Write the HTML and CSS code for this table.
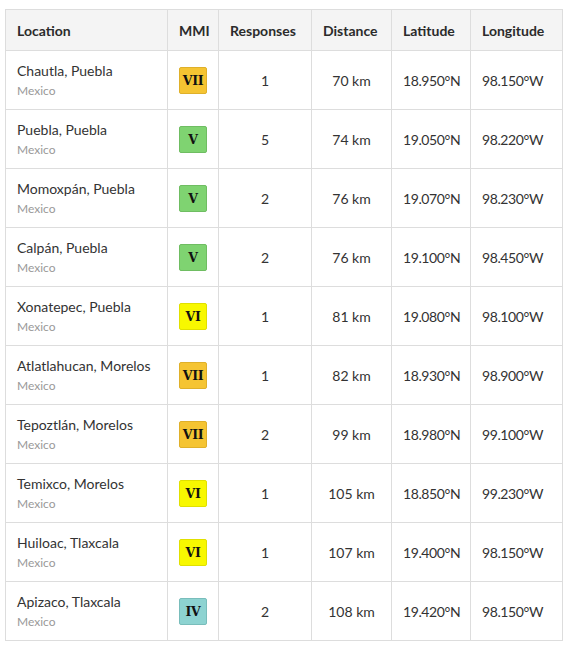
FILE: index.html
```html
<!DOCTYPE html>
<html>
<head>
<meta charset="utf-8">
<link rel="stylesheet" href="styles.css">
</head>
<body>
<table class="tbl">
  <colgroup>
    <col class="c-loc"><col class="c-mmi"><col class="c-resp"><col class="c-dist"><col class="c-lat"><col class="c-lon">
  </colgroup>
  <thead>
    <tr><th>Location</th><th>MMI</th><th>Responses</th><th>Distance</th><th>Latitude</th><th>Longitude</th></tr>
  </thead>
  <tbody>
    <tr><td><div class="name">Chautla, Puebla</div><div class="country">Mexico</div></td><td class="ctr"><span class="mmi mmi7">VII</span></td><td class="ctr">1</td><td class="ctr">70 km</td><td class="coord">18.950°N</td><td class="coord">98.150°W</td></tr>
    <tr><td><div class="name">Puebla, Puebla</div><div class="country">Mexico</div></td><td class="ctr"><span class="mmi mmi5">V</span></td><td class="ctr">5</td><td class="ctr">74 km</td><td class="coord">19.050°N</td><td class="coord">98.220°W</td></tr>
    <tr><td><div class="name">Momoxpán, Puebla</div><div class="country">Mexico</div></td><td class="ctr"><span class="mmi mmi5">V</span></td><td class="ctr">2</td><td class="ctr">76 km</td><td class="coord">19.070°N</td><td class="coord">98.230°W</td></tr>
    <tr><td><div class="name">Calpán, Puebla</div><div class="country">Mexico</div></td><td class="ctr"><span class="mmi mmi5">V</span></td><td class="ctr">2</td><td class="ctr">76 km</td><td class="coord">19.100°N</td><td class="coord">98.450°W</td></tr>
    <tr><td><div class="name">Xonatepec, Puebla</div><div class="country">Mexico</div></td><td class="ctr"><span class="mmi mmi6">VI</span></td><td class="ctr">1</td><td class="ctr">81 km</td><td class="coord">19.080°N</td><td class="coord">98.100°W</td></tr>
    <tr><td><div class="name">Atlatlahucan, Morelos</div><div class="country">Mexico</div></td><td class="ctr"><span class="mmi mmi7">VII</span></td><td class="ctr">1</td><td class="ctr">82 km</td><td class="coord">18.930°N</td><td class="coord">98.900°W</td></tr>
    <tr><td><div class="name">Tepoztlán, Morelos</div><div class="country">Mexico</div></td><td class="ctr"><span class="mmi mmi7">VII</span></td><td class="ctr">2</td><td class="ctr">99 km</td><td class="coord">18.980°N</td><td class="coord">99.100°W</td></tr>
    <tr><td><div class="name">Temixco, Morelos</div><div class="country">Mexico</div></td><td class="ctr"><span class="mmi mmi6">VI</span></td><td class="ctr">1</td><td class="ctr">105 km</td><td class="coord">18.850°N</td><td class="coord">99.230°W</td></tr>
    <tr><td><div class="name">Huiloac, Tlaxcala</div><div class="country">Mexico</div></td><td class="ctr"><span class="mmi mmi6">VI</span></td><td class="ctr">1</td><td class="ctr">107 km</td><td class="coord">19.400°N</td><td class="coord">98.150°W</td></tr>
    <tr><td><div class="name">Apizaco, Tlaxcala</div><div class="country">Mexico</div></td><td class="ctr"><span class="mmi mmi4">IV</span></td><td class="ctr">2</td><td class="ctr">108 km</td><td class="coord">19.420°N</td><td class="coord">98.150°W</td></tr>
  </tbody>
</table>
</body>
</html>
```
FILE: styles.css
```css
html, body { background: #fff; }
body {
  margin: 9px 0 0 5px;
  font-family: Lato, "Noto Sans", sans-serif;
  color: #333;
  font-size: 14px;
}
.tbl {
  border-collapse: collapse;
  table-layout: fixed;
  width: 557px;
}
.c-loc { width: 162px; }
.c-mmi { width: 51px; }
.c-resp { width: 93px; }
.c-dist { width: 80px; }
.c-lat { width: 79px; }
.c-lon { width: 92px; }
.tbl th, .tbl td {
  border: 1px solid #ddd;
  padding: 0 11px;
  text-align: left;
  vertical-align: middle;
  white-space: nowrap;
}
.tbl th {
  background: #f4f4f4;
  font-weight: 700;
  height: 40px;
  font-size: 14px;
  color: #2b2b2b;
}
.tbl td { height: 58px; }
.tbl td.ctr { text-align: center; }
.tbl td.coord { letter-spacing: -0.4px; }
.name { font-size: 14px; line-height: 18px; color: #333; }
.country { font-size: 12px; line-height: 16px; color: #999; margin-top: 3px; }
.mmi {
  display: inline-block;
  width: 26px;
  height: 25px;
  line-height: 25px;
  text-align: center;
  border: 1px solid rgba(0,0,0,0.12);
  border-radius: 2px;
  font-family: "DejaVu Serif", "Liberation Serif", serif;
  font-weight: 700;
  font-size: 12.5px;
  letter-spacing: -0.3px;
  color: #111;
  vertical-align: middle;
}
.mmi7 { background: #f5c432; border-color: #dfb02a; }
.mmi5 { background: #7fd371; border-color: #6fbd62; }
.mmi6 { background: #f8f800; border-color: #e0e000; }
.mmi4 { background: #8dd3d1; border-color: #79bdbb; }
```
